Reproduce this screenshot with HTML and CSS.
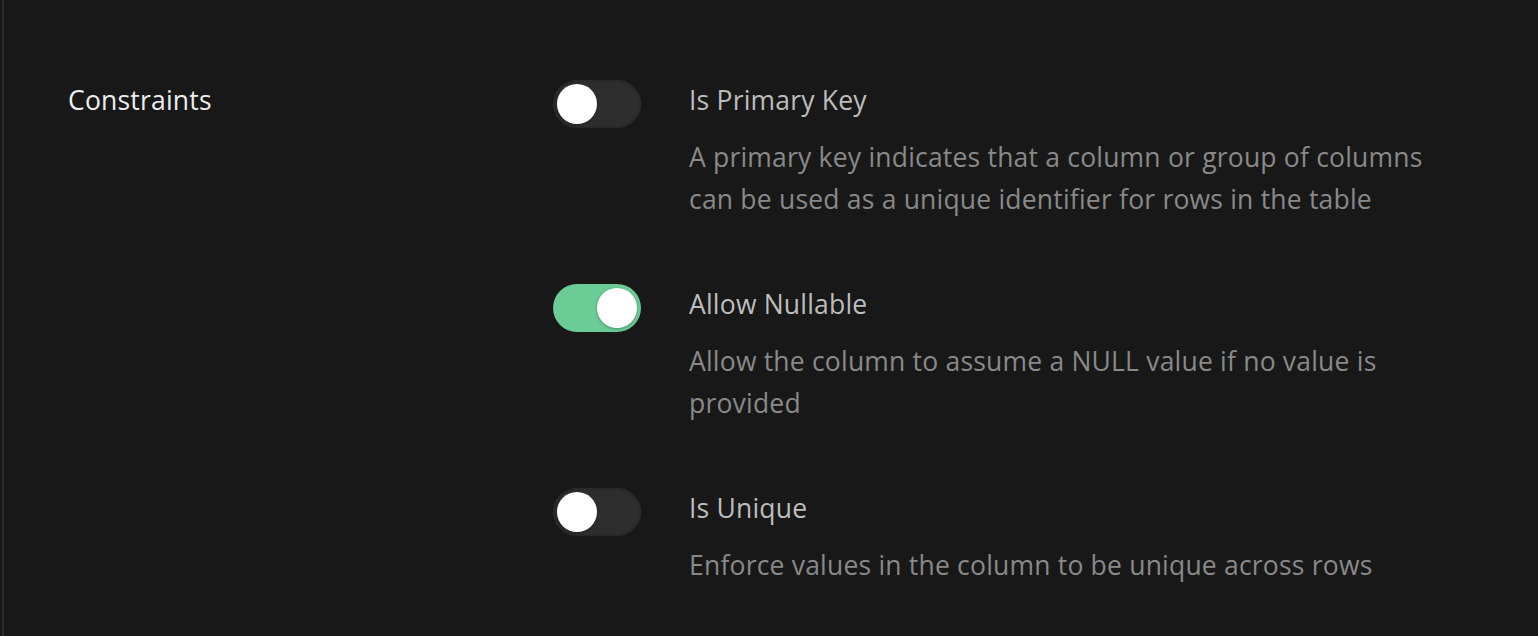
FILE: index.html
```html
<!DOCTYPE html>
<html lang="en">
<head>
<meta charset="UTF-8">
<meta name="viewport" content="width=device-width, initial-scale=1.0">
<title>Column constraints</title>
<link rel="stylesheet" href="styles.css">
</head>
<body>
<div class="panel">
    <!-- Constraints section -->
    <div class="section">
        <div class="section-label">Constraints</div>
        <div class="options">
            <div class="option">
                <span class="toggle"><span class="knob"></span></span>
                <div class="option-text">
                    <div class="option-title">Is Primary Key</div>
                    <div class="option-desc">A primary key indicates that a column or group of columns can be used as a unique identifier for rows in the table</div>
                </div>
            </div>
            <div class="option">
                <span class="toggle on"><span class="knob"></span></span>
                <div class="option-text">
                    <div class="option-title">Allow Nullable</div>
                    <div class="option-desc">Allow the column to assume a NULL value if no value is provided</div>
                </div>
            </div>
            <div class="option">
                <span class="toggle"><span class="knob"></span></span>
                <div class="option-text">
                    <div class="option-title">Is Unique</div>
                    <div class="option-desc">Enforce values in the column to be unique across rows</div>
                </div>
            </div>
        </div>
    </div>
</div>
</body>
</html>
```

FILE: styles.css
```css
/* Page */
body {
    margin: 0;
    background-color: #181818;
    font-family: "Open Sans", "Noto Sans", sans-serif;
    font-size: 26.5px;
    letter-spacing: 0.2px;
}
.panel {
    margin-left: 2px;
    border-left: 2px solid #2c2c2c;
    min-height: 636px;
    box-sizing: border-box;
    padding: 80px 0 0 64px;
}
/* Section layout */
.section {
    display: grid;
    grid-template-columns: 485px 1fr;
}
.section-label {
    color: #ededed;
    line-height: 40px;
}
.options {
    display: flex;
    flex-direction: column;
    gap: 64px;
}
.option {
    display: flex;
    gap: 48px;
}
/* Toggle switch */
.toggle {
    flex: none;
    width: 88px;
    height: 48px;
    border-radius: 24px;
    background-color: #2e2e2e;
    box-shadow: inset 0 0 0 2px #292929;
    position: relative;
}
.toggle .knob {
    position: absolute;
    top: 4px;
    left: 4px;
    width: 40px;
    height: 40px;
    border-radius: 50%;
    background-color: #fff;
    box-shadow: 0 1px 3px rgba(0, 0, 0, 0.3);
}
.toggle.on {
    background-color: #6bcc95;
    box-shadow: none;
}
.toggle.on .knob {
    left: 44px;
}
/* Texts */
.option-text {
    width: 770px;
}
.option-title {
    color: #bdbdbd;
    line-height: 40px;
}
.option-desc {
    color: #898989;
    line-height: 42px;
    margin-top: 16px;
}
```
